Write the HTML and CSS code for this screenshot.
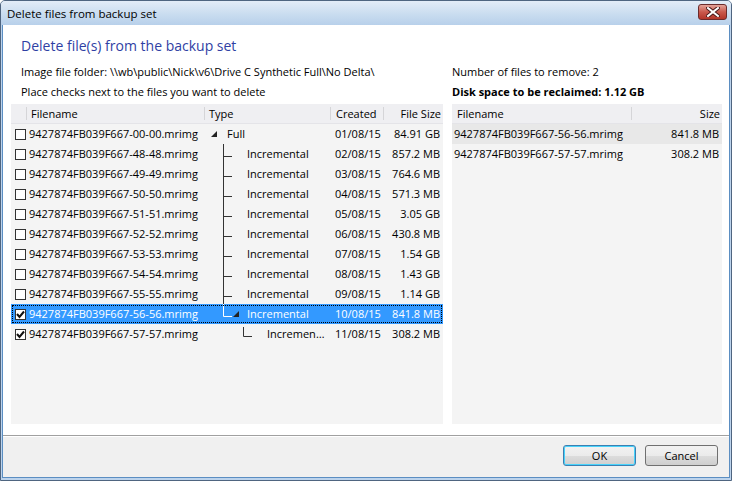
FILE: index.html
```html
<!DOCTYPE html>
<html lang="en">
<head>
  <meta charset="UTF-8" />
  <title>Delete files from backup set</title>
  <link rel="stylesheet" href="styles.css">
</head>
<body>
  <div class="window">
    <div class="titlebar">
      <span class="title">Delete files from backup set</span>
      <div class="close">
        <svg width="14" height="10" viewBox="0 0 14 10">
          <path d="M2 1 L12 9 M12 1 L2 9" stroke="#4a1a1a" stroke-width="4" stroke-linecap="square"/>
          <path d="M2 1 L12 9 M12 1 L2 9" stroke="#fff" stroke-width="2" stroke-linecap="square"/>
        </svg>
      </div>
    </div>

    <div class="frame">
      <div class="body">
        <h1 class="heading">Delete file(s) from the backup set</h1>
        <div class="panes">
          <div class="pane pane-left">
            <div class="label">Image file folder: \\wb\public\Nick\v6\Drive C Synthetic Full\No Delta\</div>
            <div class="label">Place checks next to the files you want to delete</div>
            <div class="list list-left">
              <div class="hdr">
                <div class="hc c-chk"></div>
                <div class="hc c-name sep">Filename</div>
                <div class="hc c-type sep">Type</div>
                <div class="hc c-date sep">Created</div>
                <div class="hc c-size sep right">File Size</div>
              </div>
              <div id="rows"></div>
            </div>
          </div>

          <div class="pane pane-right">
            <div class="label">Number of files to remove: 2</div>
            <div class="label bold">Disk space to be reclaimed: 1.12 GB</div>
            <div class="list list-right">
              <div class="hdr">
                <div class="hc r-name">Filename</div>
                <div class="hc r-size sep right">Size</div>
              </div>
              <div class="row inactive">
                <div class="cell r-name">9427874FB039F667-56-56.mrimg</div>
                <div class="cell r-size right">841.8 MB</div>
              </div>
              <div class="row">
                <div class="cell r-name">9427874FB039F667-57-57.mrimg</div>
                <div class="cell r-size right">308.2 MB</div>
              </div>
            </div>
          </div>
        </div>
      </div>
      <div class="footer">
        <button class="btn default">OK</button>
        <button class="btn">Cancel</button>
      </div>
    </div>
  </div>

  <script>
    const files = [
      { n: '00-00', type: 'Full',        date: '01/08/15', size: '84.91 GB', tree: 'root' },
      { n: '48-48', type: 'Incremental', date: '02/08/15', size: '857.2 MB', tree: 'mid' },
      { n: '49-49', type: 'Incremental', date: '03/08/15', size: '764.6 MB', tree: 'mid' },
      { n: '50-50', type: 'Incremental', date: '04/08/15', size: '571.3 MB', tree: 'mid' },
      { n: '51-51', type: 'Incremental', date: '05/08/15', size: '3.05 GB',  tree: 'mid' },
      { n: '52-52', type: 'Incremental', date: '06/08/15', size: '430.8 MB', tree: 'mid' },
      { n: '53-53', type: 'Incremental', date: '07/08/15', size: '1.54 GB',  tree: 'mid' },
      { n: '54-54', type: 'Incremental', date: '08/08/15', size: '1.43 GB',  tree: 'mid' },
      { n: '55-55', type: 'Incremental', date: '09/08/15', size: '1.14 GB',  tree: 'mid' },
      { n: '56-56', type: 'Incremental', date: '10/08/15', size: '841.8 MB', tree: 'last', checked: true, selected: true },
      { n: '57-57', type: 'Incremental', date: '11/08/15', size: '308.2 MB', tree: 'leaf', checked: true }
    ];

    const trees = {
      root: '<svg width="23" height="20"><polygon points="13,7 13,13 7,13" fill="#222"/></svg>',
      mid:  '<svg width="43" height="20"><path d="M19.5 0 V20 M19.5 12.5 H28" stroke="currentColor" fill="none"/></svg>',
      last: '<svg width="43" height="20"><path d="M19.5 0 V12.5 H28" stroke="currentColor" fill="none"/><polygon points="35,7 35,13 29,13" fill="#222"/></svg>',
      leaf: '<svg width="63" height="20"><path d="M39.5 3 V12.5 H48" stroke="currentColor" fill="none"/></svg>'
    };

    const check = '<svg width="9" height="9" viewBox="0 0 9 9"><path d="M1 4 L3.5 7 L8 1.5" stroke="#111" stroke-width="2" fill="none"/></svg>';

    document.getElementById('rows').innerHTML = files.map(f => `
      <div class="row${f.selected ? ' selected' : ''}">
        <div class="cell c-file">
          <span class="chk">${f.checked ? check : ''}</span>9427874FB039F667-${f.n}.mrimg
        </div>
        <div class="cell c-type">${trees[f.tree]}<span class="ellipsis">${f.type}</span></div>
        <div class="cell c-date">${f.date}</div>
        <div class="cell c-size right">${f.size}</div>
      </div>`).join('');
  </script>
</body>
</html>
```

FILE: styles.css
```css
html, body {
  margin: 0;
  padding: 0;
}
body {
  font-family: "Open Sans", "Liberation Sans", sans-serif;
  font-size: 11px;
  color: #000;
  background: #fff;
}
.window {
  width: 732px;
  height: 481px;
  box-sizing: border-box;
  border: 1px solid #4f6580;
  border-radius: 5px 5px 0 0;
  display: flex;
  flex-direction: column;
  background: #bcd3ec;
}
.titlebar {
  height: 24px;
  flex: none;
  display: flex;
  align-items: center;
  justify-content: space-between;
  padding: 0 4px 0 6px;
  background: linear-gradient(#e3ecf7, #c7dbef 60%, #b8d0ea);
  border-radius: 4px 4px 0 0;
}
.title {
  font-size: 11.5px;
  color: #000;
}
.close {
  width: 29px;
  height: 16px;
  margin-top: -3px;
  box-sizing: border-box;
  border: 1px solid #6b2b2b;
  border-radius: 3px;
  background: linear-gradient(#e4a39a, #c9594c 50%, #b3362a);
  display: flex;
  align-items: center;
  justify-content: center;
}
.frame {
  flex: 1;
  display: flex;
  flex-direction: column;
  margin: 0 1px 2px 1px;
  border: 1px solid #5b8ec2;
  border-top: none;
}
.body {
  flex: 1;
  background: #fff;
  padding: 0 4px 10px 8px;
  border-bottom: 1px solid #a0a0a0;
}
.heading {
  margin: 11px 0 6px 10px;
  font-size: 14px;
  line-height: 20px;
  font-weight: normal;
  color: #2f3fa4;
}
.panes {
  display: flex;
  gap: 9px;
}
.label {
  height: 20px;
  line-height: 20px;
  white-space: nowrap;
}
.pane-left .label {
  padding-left: 10px;
}
.bold {
  font-weight: bold;
}
.list {
  margin-top: 2px;
  height: 320px;
  background: #f4f4f4;
  overflow: hidden;
}
.list-left {
  width: 432px;
}
.list-right {
  width: 270px;
}
.hdr {
  display: flex;
  height: 20px;
  background: #efeff2;
  border-bottom: 1px solid #e4e4e8;
  box-sizing: border-box;
}
.hc {
  line-height: 19px;
  box-sizing: border-box;
  padding-left: 4px;
  white-space: nowrap;
}
.hc.sep {
  border-left: 1px solid #d5d5d8;
  margin: 3px 0;
  line-height: 13px;
}
.row {
  display: flex;
  height: 20px;
  line-height: 20px;
  white-space: nowrap;
  color: #000;
}
.row.selected {
  background: #3399ff;
  color: #fff;
  outline: 1px dotted #000;
  outline-offset: -2px;
}
.row.inactive {
  background: #e8e8e8;
}
.cell {
  box-sizing: border-box;
  overflow: hidden;
}
.right {
  text-align: right;
}
.c-chk { width: 15px; padding: 0; }
.c-name { width: 178px; }
.c-file {
  width: 193px;
  display: flex;
  align-items: center;
  padding-left: 4px;
}
.c-type {
  width: 126px;
  display: flex;
  align-items: center;
}
.c-type svg {
  flex: none;
  color: #333;
}
.row.selected .c-type svg {
  color: #fff;
}
.ellipsis {
  overflow: hidden;
  text-overflow: ellipsis;
  padding-right: 4px;
}
.c-date {
  width: 53px;
  padding-left: 5px;
}
.c-size {
  width: 60px;
  padding-right: 3px;
}
.hc.c-size {
  padding-right: 2px;
}
.chk {
  width: 11px;
  height: 11px;
  box-sizing: border-box;
  border: 1px solid #333;
  background: #fff;
  margin-right: 3px;
  display: flex;
  align-items: center;
  justify-content: center;
  flex: none;
}
.r-name {
  width: 179px;
  padding-left: 2px;
}
.hc.r-name {
  padding-left: 5px;
}
.r-size {
  width: 91px;
  padding-right: 3px;
}
.hc.r-size {
  padding-right: 2px;
}
.footer {
  height: 41px;
  flex: none;
  background: #f0f0f0;
  border-top: 1px solid #fff;
  display: flex;
  justify-content: flex-end;
  align-items: flex-start;
  gap: 9px;
  padding: 8px 11px 0 0;
  box-sizing: border-box;
}
.btn {
  width: 73px;
  height: 21px;
  font-family: "Open Sans", "Liberation Sans", sans-serif;
  font-size: 11px;
  color: #000;
  border: 1px solid #707070;
  border-radius: 3px;
  background: linear-gradient(#f2f2f2, #ebebeb 50%, #dddddd 51%, #cfcfcf);
  padding: 0;
}
.btn.default {
  border-color: #3c7fb1;
  box-shadow: inset 0 0 0 1px #48d3fb;
}
```
